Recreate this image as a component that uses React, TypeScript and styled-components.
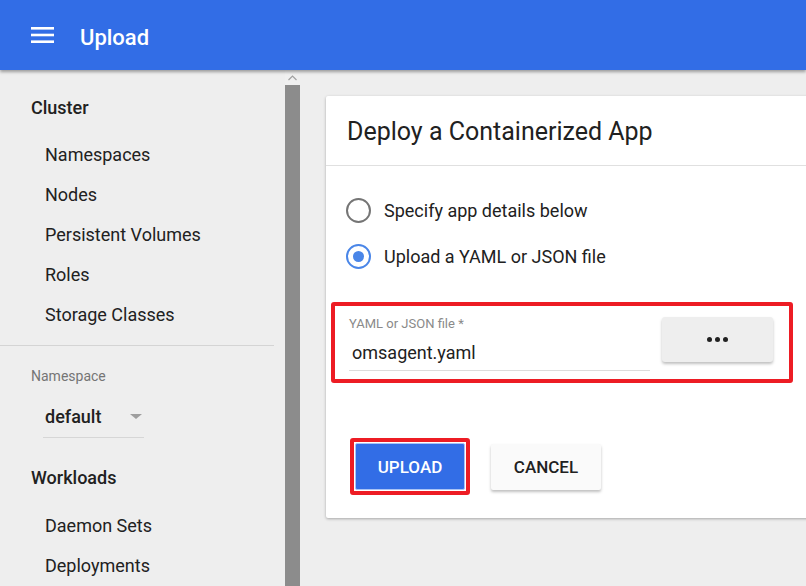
import React from "react";
import styled, { createGlobalStyle } from "styled-components";

const GlobalStyle = createGlobalStyle`
  html, body { margin: 0; padding: 0; }
  body {
    width: 806px;
    height: 586px;
    overflow: hidden;
    background: #eeeeee;
    font-family: Roboto, "Noto Sans", "Liberation Sans", sans-serif;
    color: #212121;
  }
  * { box-sizing: border-box; }
`;

const Page = styled.div`
  display: flex;
  flex-direction: column;
  width: 806px;
  height: 586px;
  overflow: hidden;
`;

const Header = styled.header`
  position: relative;
  z-index: 2;
  flex: 0 0 70px;
  height: 70px;
  background: #326de6;
  box-shadow: 0 2px 3px rgba(0, 0, 0, 0.35);
  display: flex;
  align-items: center;
  padding-left: 31px;
`;

const MenuIcon = styled.svg`
  width: 23px;
  height: 18px;
  margin-right: 26px;
  margin-top: 1px;
`;

const HeaderTitle = styled.h1`
  margin: 0;
  font-size: 22px;
  font-weight: 500;
  color: #ffffff;
  line-height: 1;
  margin-top: 5px;
`;

const Body = styled.div`
  flex: 1;
  display: flex;
  min-height: 0;
`;

const Sidebar = styled.nav`
  width: 285px;
  flex: 0 0 285px;
  background: #eeeeee;
  padding-top: 18px;
  overflow: hidden;
`;

const Scrollbar = styled.div`
  width: 15px;
  flex: 0 0 15px;
  display: flex;
  flex-direction: column;
  background: #eeeeee;
`;

const ScrollArrow = styled.div`
  height: 15px;
  display: flex;
  align-items: center;
  justify-content: center;
  background: #f0f0f0;
`;

const ScrollThumb = styled.div`
  flex: 1;
  background: #8c8c8c;
`;

const SectionTitle = styled.div<{ $gapAfter?: number }>`
  font-size: 18px;
  font-weight: 500;
  line-height: 40px;
  height: 40px;
  padding-left: 31px;
  margin-bottom: ${(p) => p.$gapAfter ?? 8}px;
  color: #212121;
`;

const NavItem = styled.div`
  font-size: 18px;
  line-height: 40px;
  height: 40px;
  padding-left: 45px;
  color: #212121;
`;

const Divider = styled.hr`
  border: 0;
  border-top: 1px solid #d4d4d4;
  margin: 10px 11px 0 0;
`;

const FieldLabel = styled.div`
  font-size: 14px;
  line-height: 20px;
  color: #757575;
  padding-left: 31px;
  margin-top: 20px;
`;

const NsSelect = styled.div`
  margin: 11px 0 20px 43px;
  width: 101px;
  height: 41px;
  border-bottom: 1px solid #d6d6d6;
  display: flex;
  align-items: center;
  justify-content: space-between;
  padding: 0 1px 0 2px;
  font-size: 18px;
  font-weight: 500;
  line-height: 40px;
`;

const Caret = styled.span`
  width: 0;
  height: 0;
  border-left: 6px solid transparent;
  border-right: 6px solid transparent;
  border-top: 5px solid #9e9e9e;
  margin-right: 1px;
  margin-top: -2px;
`;

const Main = styled.main`
  flex: 1;
  background: #eeeeee;
  padding: 26px 0 0 26px;
  overflow: hidden;
  min-width: 0;
`;

const Card = styled.section`
  width: 520px;
  height: 422px;
  background: #ffffff;
  box-shadow: 0 1px 3px rgba(0, 0, 0, 0.3);
  border-radius: 2px;
`;

const CardHeader = styled.div`
  height: 70px;
  display: flex;
  align-items: center;
  padding-left: 21px;
  border-bottom: 1px solid #e0e0e0;
`;

const CardTitle = styled.h2`
  margin: 0;
  font-size: 25px;
  font-weight: 400;
  color: #212121;
  margin-top: 1px;
`;

const CardContent = styled.div`
  padding: 21px 0 0 20px;
`;

const RadioRow = styled.label`
  display: flex;
  align-items: center;
  height: 46px;
  font-size: 18px;
  color: #212121;
`;

const RadioCircle = styled.span<{ $checked?: boolean }>`
  width: 25px;
  height: 25px;
  border-radius: 50%;
  border: 2.5px solid ${(p) => (p.$checked ? "#4a86e8" : "#757575")};
  display: flex;
  align-items: center;
  justify-content: center;
  margin-right: 13px;
  &::after {
    content: "";
    display: ${(p) => (p.$checked ? "block" : "none")};
    width: 11px;
    height: 11px;
    border-radius: 50%;
    background: #4a86e8;
  }
`;

const Highlight = styled.div`
  border: 4px solid #ed1c24;
  border-radius: 3px;
`;

const FileBox = styled(Highlight)`
  margin: 23px 0 0 -15px;
  width: 462px;
  height: 81px;
  display: flex;
  align-items: flex-start;
  padding: 10px 16px 0 14px;
`;

const FileField = styled.div`
  width: 301px;
  display: flex;
  flex-direction: column;
`;

const SmallLabel = styled.div`
  font-size: 13px;
  line-height: 16px;
  color: #8a8a8a;
`;

const FileInput = styled.div`
  margin-top: 8px;
  height: 31px;
  line-height: 26px;
  padding-left: 3px;
  font-size: 18px;
  color: #212121;
  border-bottom: 1px solid #dcdcdc;
`;

const BrowseButton = styled.button`
  margin-left: 12px;
  margin-top: 1px;
  width: 111px;
  height: 45px;
  border: 0;
  border-radius: 3px;
  background: #eeeeee;
  box-shadow: 0 2px 3px rgba(0, 0, 0, 0.25);
  display: flex;
  align-items: center;
  justify-content: center;
  gap: 3px;
`;

const Dot = styled.span`
  width: 5px;
  height: 5px;
  border-radius: 50%;
  background: #212121;
`;

const Actions = styled.div`
  display: flex;
  align-items: center;
  margin: 55px 0 0 4px;
  gap: 21px;
`;

const UploadBox = styled(Highlight)`
  padding: 1px;
`;

const ActionButton = styled.button<{ $primary?: boolean }>`
  width: 110px;
  height: ${(p) => (p.$primary ? "47px" : "46px")};
  border: ${(p) => (p.$primary ? "1px solid #a9c3f5" : "0")};
  border-radius: 2px;
  background: ${(p) => (p.$primary ? "#326de6" : "#fafafa")};
  color: ${(p) => (p.$primary ? "#ffffff" : "#212121")};
  box-shadow: ${(p) => (p.$primary ? "none" : "0 2px 3px rgba(0, 0, 0, 0.25)")};
  font-family: Roboto, "Noto Sans", sans-serif;
  font-size: 17px;
  font-weight: 500;
  letter-spacing: 0;
  text-transform: uppercase;
`;

export default function App() {
  return (
    <>
      <GlobalStyle />
      <Page>
        <Header>
          <MenuIcon viewBox="0 0 23 18">
            <rect x="0" y="0" width="23" height="2.6" fill="#fff" />
            <rect x="0" y="6.7" width="23" height="2.6" fill="#fff" />
            <rect x="0" y="13.4" width="23" height="2.6" fill="#fff" />
          </MenuIcon>
          <HeaderTitle>Upload</HeaderTitle>
        </Header>
        <Body>
          <Sidebar>
            <SectionTitle $gapAfter={7}>Cluster</SectionTitle>
            <NavItem>Namespaces</NavItem>
            <NavItem>Nodes</NavItem>
            <NavItem>Persistent Volumes</NavItem>
            <NavItem>Roles</NavItem>
            <NavItem>Storage Classes</NavItem>
            <Divider />
            <FieldLabel>Namespace</FieldLabel>
            <NsSelect>
              <span>default</span>
              <Caret />
            </NsSelect>
            <SectionTitle>Workloads</SectionTitle>
            <NavItem>Daemon Sets</NavItem>
            <NavItem>Deployments</NavItem>
          </Sidebar>
          <Scrollbar>
            <ScrollArrow>
              <svg width="9" height="6" viewBox="0 0 9 6">
                <polyline points="0.5,5 4.5,1 8.5,5" fill="none" stroke="#a0a0a0" strokeWidth="1.2" />
              </svg>
            </ScrollArrow>
            <ScrollThumb />
          </Scrollbar>
          <Main>
            <Card>
              <CardHeader>
                <CardTitle>Deploy a Containerized App</CardTitle>
              </CardHeader>
              <CardContent>
                <RadioRow>
                  <RadioCircle />
                  Specify app details below
                </RadioRow>
                <RadioRow>
                  <RadioCircle $checked />
                  Upload a YAML or JSON file
                </RadioRow>
                <FileBox>
                  <FileField>
                    <SmallLabel>YAML or JSON file *</SmallLabel>
                    <FileInput>omsagent.yaml</FileInput>
                  </FileField>
                  <BrowseButton aria-label="Browse">
                    <Dot />
                    <Dot />
                    <Dot />
                  </BrowseButton>
                </FileBox>
                <Actions>
                  <UploadBox>
                    <ActionButton $primary>Upload</ActionButton>
                  </UploadBox>
                  <ActionButton>Cancel</ActionButton>
                </Actions>
              </CardContent>
            </Card>
          </Main>
        </Body>
      </Page>
    </>
  );
}
